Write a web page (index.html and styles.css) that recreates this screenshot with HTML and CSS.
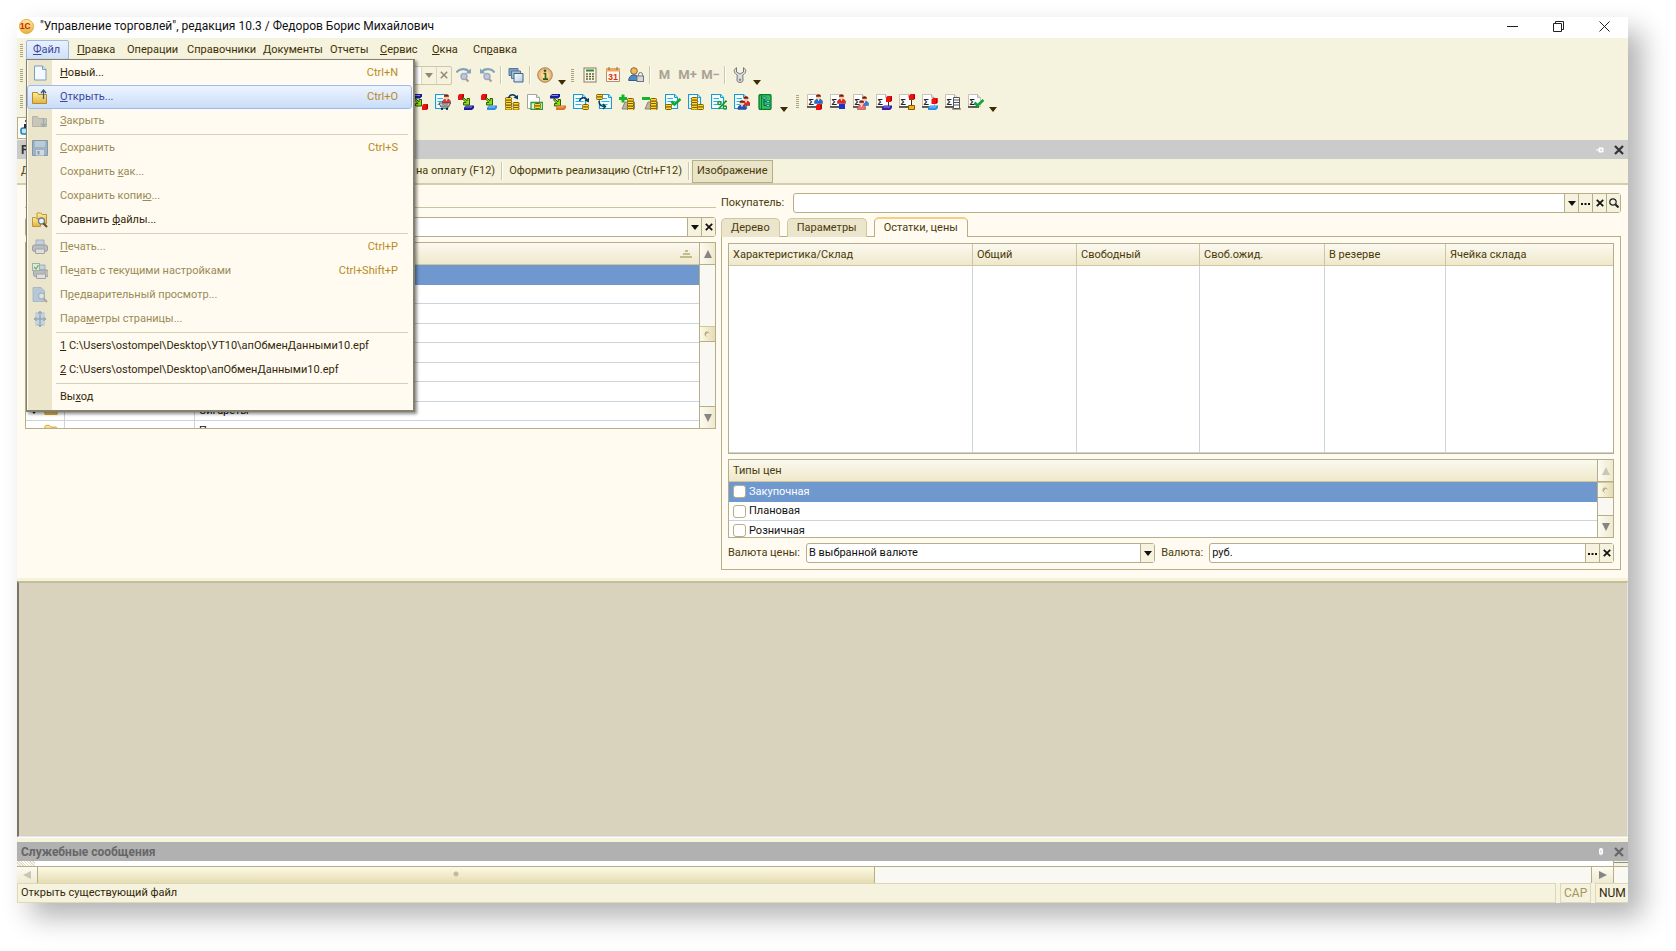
FILE: index.html
```html
<!DOCTYPE html>
<html lang="ru">
<head>
<meta charset="utf-8">
<title>Управление торговлей, редакция 10.3</title>
<link rel="stylesheet" href="styles.css">
</head>
<body>
<svg class="sprite" aria-hidden="true">
  <defs>
    <linearGradient id="gold" x1="0" y1="0" x2="0" y2="1"><stop offset="0" stop-color="#fdeea0"/><stop offset="1" stop-color="#e3b23c"/></linearGradient>
    <linearGradient id="pane" x1="0" y1="0" x2="1" y2="1"><stop offset="0" stop-color="#fff"/><stop offset="1" stop-color="#b4cbe0"/></linearGradient>
    <radialGradient id="amber"><stop offset="0" stop-color="#fff3d0"/><stop offset="1" stop-color="#f0a858"/></radialGradient>
    <g id="doc"><path d="M.5.500h9l3 3v11H.5z" fill="#f4fcff" stroke="#1c9ad0" stroke-width="1.200"/><path d="M9.500.500v3h3" fill="#bfe6f6" stroke="#1c9ad0"/><path d="M2.500 4.500h5.500M2.500 7.500h8M2.500 10.500h6" stroke="#25b4e6"/></g>
    <g id="page"><path d="M.5.500h9l3 3v11H.5z" fill="#fff" stroke="#a5a5a0"/><path d="M9.500.500v3h3" fill="#e4e4e4" stroke="#a5a5a0"/></g>
    <g id="coin"><rect x=".5" y=".5" width="6" height="2.500" rx="1" fill="#ffd92e" stroke="#7d5c00"/></g>
    <g id="coins3"><use href="#coin" y="5"/><use href="#coin" y="2.500"/><use href="#coin"/></g>
    <g id="cube"><path d="M0 1.500L1.500 0H6v4.500L4.500 6H0z" fill="#ee1111"/><path d="M4.500 6V1.500L6 0v4.500z" fill="#b00000"/></g>
    <g id="slab"><path d="M0 2l2-2h8v2.500L8 4.500H0z" fill="currentColor"/><path d="M1.500 1.500h6.500" stroke="#fff" stroke-opacity=".5"/></g>
    <g id="arrow"><path d="M0 0l4 4V1.500h2.500V8H.5V5.500H3L0 2.500z" fill="#8fdc10" stroke="#2a6000"/></g>
    <g id="man"><path d="M.5 9.500V7L2.500 5h4l2 2v2.500z" fill="currentColor" stroke="#333" stroke-opacity=".55" stroke-width=".7"/><circle cx="4.500" cy="3.200" r="2.200" fill="#ffc9a0"/><path d="M2 2.800C2-.5 7-.5 7 2.800z" fill="#7a1d0c"/><path d="M3.500 5.200l1 2 1-2z" fill="#fff"/></g>
    <g id="sigma"><path d="M.5.500h9l3 3v9H.5z" fill="#fff" stroke="#c4c4bf"/><path d="M9.500.500v3h3" fill="#e4e4e4" stroke="#b4b4b0"/><path d="M0 13h11" stroke="#333" stroke-width="1.500"/><text x="1.500" y="10.500" class="glyph">Σ</text></g>
    <g id="curl"><path d="M.5 4C2-.3 7-.3 8.500 4" fill="none" stroke="#0b3a5c" stroke-width="1.400"/><path d="M5.500 3.500l4.500 2V1z" fill="#0b3a5c"/></g>
    <g id="check"><path d="M0 3.500l3 3 6-5.500" fill="none" stroke="#0fa82c" stroke-width="2.600"/></g>
    <g id="find"><path d="M.5 5.500C3 1.500 10 .5 13.500 5" fill="none" stroke="#86a3ba" stroke-width="2.200"/><path d="M9.500 6.500H15V1.500z" fill="#86a3ba"/><circle cx="8" cy="9.500" r="3" fill="#b9cbe2" stroke="#a3a9bb" stroke-width="1.400"/><path d="M10 12l2.500 2.500" stroke="#b39a92" stroke-width="2.200"/></g>
    <g id="printer"><path d="M4 6V1h8v5z" fill="#c4d2e0" stroke="#a2b0bd"/><rect x=".5" y="6" width="15" height="6.500" rx="2" fill="#b9bcc0" stroke="#9a9da0"/><path d="M3.500 10h9v4.500h-9z" fill="#dfdfdd" stroke="#a3a3a3"/><path d="M11 8h2" stroke="#d99a9a"/></g>
    <symbol id="i-new" viewBox="0 0 16 16"><path d="M2.500 1h8l3.500 3.500V15H2.500z" fill="#f3f9ff" stroke="#7d9db8"/><path d="M10.500 1v3.500H14" fill="#cde2f4" stroke="#7d9db8"/></symbol>
    <symbol id="i-open" viewBox="0 0 16 16"><path d="M.5 3.500h5l1 2h8v9H.5z" fill="url(#gold)" stroke="#b88a2c"/><path d="M11.500 10V1.500M9 4l2.500-3L14 4" fill="none" stroke="#3c5c7c" stroke-width="1.300"/></symbol>
    <symbol id="i-close" viewBox="0 0 16 16"><path d="M.5 3.500h5l1 2h8v8H.5z" fill="#c8c6b8" stroke="#b5b3a6"/><path d="M11.500 5v8M9 10.500l2.500 3 2.500-3" fill="none" stroke="#98aab8" stroke-width="1.300"/></symbol>
    <symbol id="i-save" viewBox="0 0 16 16"><path d="M.5.500h15v15H.5z" fill="#9fb2c4" stroke="#8498ab"/><path d="M3 1h10v6H3z" fill="#bccad6"/><path d="M4 10h8v5.500H4z" fill="#d2d9de"/><path d="M5.500 11h2v3.500h-2z" fill="#8498ab"/></symbol>
    <symbol id="i-compare" viewBox="0 0 16 16"><path d="M5 1h4l1 1.500h4.500v9H5z" fill="url(#gold)" stroke="#c1943a"/><path d="M.5 5.500h3l1 1.500h4v7.500h-8z" fill="url(#gold)" stroke="#c1943a"/><circle cx="9.500" cy="9" r="3" fill="#e9f3fb" stroke="#6f7f90" stroke-width="1.300"/><path d="M11.500 11.500l3.500 3.500" stroke="#6b4524" stroke-width="2"/></symbol>
    <symbol id="i-print" viewBox="0 0 16 16"><use href="#printer"/></symbol>
    <symbol id="i-printset" viewBox="0 0 16 16"><use href="#printer" x="1" y="1"/><rect x=".5" y=".5" width="7" height="7" fill="#dfeadb" stroke="#9db39b"/><path d="M2 4l2 2 2.500-4" fill="none" stroke="#6fae72" stroke-width="1.300"/></symbol>
    <symbol id="i-preview" viewBox="0 0 16 16"><path d="M1 .5h8l3.500 3.500v10.500H1z" fill="#b6c7d6" stroke="#a8bac9"/><circle cx="9.500" cy="9" r="3" fill="#d9e4ec" stroke="#9da7b1"/><path d="M11.500 11.500L15 15" stroke="#b3a195" stroke-width="2"/></symbol>
    <symbol id="i-pageset" viewBox="0 0 16 16"><rect x="3" y="1" width="10" height="14" rx="1" fill="#c6d1da"/><path d="M8 0v16M2 8h12M6 2.500L8 .5l2 2M6 13.500l2 2 2-2M4.500 6l-2 2 2 2M11.500 6l2 2-2 2" fill="none" stroke="#8398aa"/></symbol>
    <symbol id="i-find1" viewBox="0 0 16 16"><use href="#find"/></symbol>
    <symbol id="i-find2" viewBox="0 0 16 16"><path d="M15.500 5.500C13 1.500 6 .5 2.500 5" fill="none" stroke="#86a3ba" stroke-width="2.200"/><path d="M6.500 6.500H1V1.500z" fill="#86a3ba"/><circle cx="8" cy="9.500" r="3" fill="#b9cbe2" stroke="#a3a9bb" stroke-width="1.400"/><path d="M10 12l2.500 2.500" stroke="#b39a92" stroke-width="2.200"/></symbol>
    <symbol id="i-wins" viewBox="0 0 16 16"><path d="M1 1.500h9v7H1z" fill="#7fa0bf" stroke="#54779b"/><path d="M3.500 4h9v7.500h-9z" fill="#a3bdd6" stroke="#54779b"/><path d="M6 6.500h9V15H6z" fill="url(#pane)" stroke="#3f648a"/></symbol>
    <symbol id="i-info" viewBox="0 0 16 16"><circle cx="8" cy="8" r="7.300" fill="url(#amber)" stroke="#9b8a6c"/><path d="M6.500 6.500h2V12M6 12.200h5" stroke="#2f5d1a" stroke-width="1.700" fill="none"/><circle cx="8" cy="3.800" r="1.300" fill="#2f5d1a"/></symbol>
    <symbol id="i-calc" viewBox="0 0 16 16"><rect x="2" y="1" width="12" height="14" fill="#fdf6e4" stroke="#8a7b68"/><path d="M4 3.500h8" stroke="#2f8a3c" stroke-width="2"/><path d="M4 7h8M4 9.500h8M4 12h8" stroke="#5b6a36" stroke-width="1.500" stroke-dasharray="2 1"/></symbol>
    <symbol id="i-cal" viewBox="0 0 16 16"><path d="M1.500 1.500h13v13h-13z" fill="#fff8ee" stroke="#b78c68"/><path d="M1 1h14v3.500H1z" fill="#eda765"/><path d="M4 0v3M12 0v3" stroke="#8a6a4c"/><text x="3" y="13" class="glyph glyph-red">31</text></symbol>
    <symbol id="i-user" viewBox="0 0 16 16"><circle cx="6" cy="4" r="3.300" fill="#f0b860" stroke="#8f6532"/><path d="M.7 13.500c0-7.500 10.500-7.500 10.500 0z" fill="#4f8bc0" stroke="#2c5f8c"/><path d="M10.500 9V7.500a2 2 0 014 0V9" fill="none" stroke="#777"/><rect x="9" y="9" width="6.500" height="5.500" fill="#d5d8dc" stroke="#6d7680"/></symbol>
    <symbol id="i-wrench" viewBox="0 0 16 16"><path d="M4.500.700v4.300L8 7l3.500-2V.7c3.500 2 2.700 5.500-.8 7.500l.3 5c0 3-6 3-6 0l.3-5C1.800 6.200 1 2.700 4.500.700z" fill="#dedede" stroke="#757575"/><circle cx="8" cy="12.800" r="1.200" fill="#888"/></symbol>
    <symbol id="i-a0" viewBox="0 0 16 16"><use href="#slab" color="#1c1c9c"/><use href="#arrow" x="3" y="4"/><use href="#cube" x="10" y="10"/></symbol>
    <symbol id="i-a1" viewBox="0 0 16 16"><use href="#doc"/><use href="#man" x="7" y="0" color="#e33"/><path d="M4 9h11.500l-2 4H6z" fill="#fff" stroke="#444"/><path d="M6 11h8M8 9v4M10 9v4M12 9v4" stroke="#555" stroke-width=".7"/><circle cx="7" cy="15" r="1"/><circle cx="12" cy="15" r="1"/></symbol>
    <symbol id="i-a2" viewBox="0 0 16 16"><use href="#cube"/><use href="#arrow" x="5" y="3"/><use href="#slab" x="6" y="11.500" color="#1c1c9c"/></symbol>
    <symbol id="i-a3" viewBox="0 0 16 16"><use href="#cube"/><use href="#arrow" x="5" y="3"/><use href="#slab" x="6" y="11.500" color="#2d8fe8"/></symbol>
    <symbol id="i-a4" viewBox="0 0 16 16"><use href="#coins3" x="1" y="8"/><use href="#coins3" x="1" y="3"/><use href="#coins3" x="8.500" y="8"/><use href="#curl" x="4" y="0"/></symbol>
    <symbol id="i-a5" viewBox="0 0 16 16"><use href="#page"/><path d="M4 8.500h11.500v7H4z" fill="#eaf6dc" stroke="#2b9a3a" stroke-width="1.300"/><use href="#coin" x="7" y="9"/><use href="#coin" x="7" y="11.500"/></symbol>
    <symbol id="i-a6" viewBox="0 0 16 16"><use href="#slab" color="#1c1c9c"/><use href="#arrow" x="4" y="4"/><use href="#slab" x="6" y="11.500" color="#dc7424"/></symbol>
    <symbol id="i-a7" viewBox="0 0 16 16"><use href="#doc"/><use href="#curl" x="6" y="3"/><use href="#coin" x="9" y="10"/><use href="#coin" x="9" y="12.500"/></symbol>
    <symbol id="i-a8" viewBox="0 0 16 16"><use href="#doc" x="3"/><use href="#coin"/><use href="#coin" y="2.500"/><path d="M3 7c0 5 3 5.500 6 5.500M7 10l2.500 2.500L7 15" fill="none" stroke="#0b3a5c" stroke-width="1.400"/></symbol>
    <symbol id="i-a9" viewBox="0 0 16 16"><path d="M6 8h9.500v7H3z" fill="#b9b6a6" stroke="#8b8878"/><use href="#coins3" x="8" y="4"/><use href="#coins3" x="8" y="9"/><path d="M0 4.500h8M4 .5v8" stroke="#14b52c" stroke-width="3"/></symbol>
    <symbol id="i-a10" viewBox="0 0 16 16"><path d="M6 8h9.500v7H3z" fill="#b9b6a6" stroke="#8b8878"/><use href="#coins3" x="8" y="4"/><use href="#coins3" x="8" y="9"/><path d="M0 4.500h8" stroke="#14b52c" stroke-width="3"/></symbol>
    <symbol id="i-a11" viewBox="0 0 16 16"><use href="#doc"/><use href="#check" x="6.500" y="4"/><use href="#coin" y="10"/><use href="#coin" y="12.500"/></symbol>
    <symbol id="i-a12" viewBox="0 0 16 16"><use href="#doc"/><use href="#coins3" x="3" y="3"/><use href="#coins3" x="3" y="8"/><use href="#coin" x="9" y="10"/><use href="#coin" x="9" y="12.500"/></symbol>
    <symbol id="i-a13" viewBox="0 0 16 16"><use href="#doc"/><path d="M15.500 6.500L7.500 15" stroke="#12962d" stroke-width="1.800"/><circle cx="8.500" cy="9" r="1.600" fill="#fff" stroke="#12962d" stroke-width="1.500"/><circle cx="14" cy="13.500" r="1.600" fill="#fff" stroke="#12962d" stroke-width="1.500"/></symbol>
    <symbol id="i-a14" viewBox="0 0 16 16"><use href="#doc"/><use href="#man" x="7.500" y="2" color="#e22"/><use href="#man" x="3.500" y="6" color="#1d53c8"/></symbol>
    <symbol id="i-a15" viewBox="0 0 16 16"><rect x="2" y=".5" width="12" height="15" rx="1.500" fill="#2fc455" stroke="#0b7b2c" stroke-width="1.300"/><path d="M4.500 1v14" stroke="#0b7b2c"/><path d="M7 4v7.500h2M7 7.500h2" stroke="#0e4f6e" fill="none"/><path d="M6 3h3v2H6zM9.500 6.500h3v2h-3zM9.500 10.500h3v2h-3z" fill="#7fe0f0" stroke="#0e4f6e" stroke-width=".6"/></symbol>
    <symbol id="i-s0" viewBox="0 0 16 16"><use href="#sigma"/><use href="#man" x="7" y="0" color="#1d6be0"/><use href="#cube" x="9" y="10"/></symbol>
    <symbol id="i-s1" viewBox="0 0 16 16"><use href="#sigma"/><use href="#man" x="7" y="0" color="#e22"/><path d="M9 10h6v5H9z" fill="#1a35c8"/></symbol>
    <symbol id="i-s2" viewBox="0 0 16 16"><use href="#sigma"/><use href="#man" x="7" y="2" color="#3b7be0"/><use href="#man" x="4" y="6" color="#f66"/></symbol>
    <symbol id="i-s3" viewBox="0 0 16 16"><use href="#sigma"/><use href="#cube" x="10" y="2"/><path d="M12.500 8v4" stroke="#333"/><use href="#slab" x="6" y="11.500" color="#3a1cac"/></symbol>
    <symbol id="i-s4" viewBox="0 0 16 16"><use href="#sigma"/><use href="#cube" x="10" y="0"/><path d="M12.500 6v5" stroke="#333"/><path d="M9.500 11.500h6v4h-6z" fill="#f2b21c" stroke="#8c5a00"/></symbol>
    <symbol id="i-s5" viewBox="0 0 16 16"><use href="#sigma"/><use href="#cube" x="9.500" y="4"/><use href="#slab" x="6" y="11.500" color="#2d8fe8"/></symbol>
    <symbol id="i-s6" viewBox="0 0 16 16"><use href="#sigma"/><path d="M8.500 3.500h6v11h-6z" fill="#fff" stroke="#555"/><path d="M9 6h5M9 8.500h5M9 11h5M7 15h9" stroke="#555"/></symbol>
    <symbol id="i-s7" viewBox="0 0 16 16"><use href="#sigma"/><use href="#check" x="6.500" y="5"/></symbol>
    <symbol id="i-folder" viewBox="0 0 16 16"><path d="M1 3.500C1 2 2 1.500 3 1.500h3L8 3.500h5c1.500 0 2 1 2 2V12H1z" fill="url(#gold)" stroke="#c99a2e"/></symbol>
    <symbol id="i-x" viewBox="0 0 10 10"><path d="M1 1l8 8M9 1L1 9" stroke="currentColor" stroke-width="2.200"/></symbol>
    <symbol id="i-down" viewBox="0 0 8 5"><path d="M0 0h8L4 5z" fill="currentColor"/></symbol>
    <symbol id="i-dots" viewBox="0 0 9 3"><path d="M0 1h2v2H0zM3.500 1h2v2h-2zM7 1h2v2H7z" fill="currentColor"/></symbol>
    <symbol id="i-lens" viewBox="0 0 10 10"><circle cx="4" cy="4" r="3.200" fill="none" stroke="#222" stroke-width="1.200"/><path d="M6.500 6.500L9.500 9.500" stroke="#222" stroke-width="2"/></symbol>
  </defs>
</svg>

<main class="window">
  <header class="titlebar">
    <svg class="logo" viewBox="0 0 16 16" aria-hidden="true"><circle cx="8" cy="8" r="7.500" fill="url(#gold)" stroke="#e0a92c"/><text x="1" y="11" class="logo-text">1С</text></svg>
    <h1 class="caption">"Управление торговлей", редакция 10.3 / Федоров Борис Михайлович</h1>
    <div class="winbtns">
      <button type="button" aria-label="Свернуть"><svg width="11" height="11" viewBox="0 0 11 11"><path d="M0 5.500h11" stroke="#222"/></svg></button>
      <button type="button" aria-label="Восстановить"><svg width="11" height="11" viewBox="0 0 11 11"><path d="M.5 2.500h8v8h-8zM2.500 2.500v-2h8v8h-2" fill="none" stroke="#222"/></svg></button>
      <button type="button" aria-label="Закрыть окно"><svg width="11" height="11" viewBox="0 0 11 11"><path d="M.5.500l10 10M10.500.500l-10 10" stroke="#222"/></svg></button>
    </div>
  </header>

  <nav class="menubar">
    <span class="grip"></span>
    <div class="menus">
      <div class="menu-root">
        <button type="button" class="menu open"><u>Ф</u>айл</button>
        <div class="popup" role="menu">
          <button type="button" class="item"><span class="ico"><svg><use href="#i-new"/></svg></span><span><u>Н</u>овый...</span><kbd>Ctrl+N</kbd></button>
          <button type="button" class="item hot"><span class="ico"><svg><use href="#i-open"/></svg></span><span><u>О</u>ткрыть...</span><kbd>Ctrl+O</kbd></button>
          <button type="button" class="item off"><span class="ico"><svg><use href="#i-close"/></svg></span><span><u>З</u>акрыть</span></button>
          <hr>
          <button type="button" class="item off"><span class="ico"><svg><use href="#i-save"/></svg></span><span><u>С</u>охранить</span><kbd>Ctrl+S</kbd></button>
          <button type="button" class="item off"><span class="ico"></span><span>Сохранить <u>к</u>ак...</span></button>
          <button type="button" class="item off"><span class="ico"></span><span>Сохранить копи<u>ю</u>...</span></button>
          <button type="button" class="item"><span class="ico"><svg><use href="#i-compare"/></svg></span><span>Сравнить <u>ф</u>айлы...</span></button>
          <hr>
          <button type="button" class="item off"><span class="ico"><svg><use href="#i-print"/></svg></span><span><u>П</u>ечать...</span><kbd>Ctrl+P</kbd></button>
          <button type="button" class="item off"><span class="ico"><svg><use href="#i-printset"/></svg></span><span>Пе<u>ч</u>ать с текущими настройками</span><kbd>Ctrl+Shift+P</kbd></button>
          <button type="button" class="item off"><span class="ico"><svg><use href="#i-preview"/></svg></span><span>П<u>р</u>едварительный просмотр...</span></button>
          <button type="button" class="item off"><span class="ico"><svg><use href="#i-pageset"/></svg></span><span>Пара<u>м</u>етры страницы...</span></button>
          <hr>
          <button type="button" class="item"><span class="ico"></span><span><u>1</u> C:\Users\ostompel\Desktop\УТ10\апОбменДанными10.epf</span></button>
          <button type="button" class="item"><span class="ico"></span><span><u>2</u> C:\Users\ostompel\Desktop\апОбменДанными10.epf</span></button>
          <hr>
          <button type="button" class="item"><span class="ico"></span><span>Вы<u>х</u>од</span></button>
        </div>
      </div>
      <button type="button" class="menu"><u>П</u>равка</button>
      <button type="button" class="menu">Операции</button>
      <button type="button" class="menu">Справочники</button>
      <button type="button" class="menu">Документы</button>
      <button type="button" class="menu">Отчеты</button>
      <button type="button" class="menu"><u>С</u>ервис</button>
      <button type="button" class="menu"><u>О</u>кна</button>
      <button type="button" class="menu">Сп<u>р</u>авка</button>
    </div>
  </nav>

  <div class="toolbar">
    <span class="grip"></span>
    <div class="search">
      <input type="text" aria-label="Поиск">
      <button type="button" aria-label="История поиска"><svg class="dn"><use href="#i-down"/></svg></button>
      <button type="button" aria-label="Очистить"><svg class="xs" viewBox="0 0 10 10"><path d="M1 1l8 8M9 1L1 9" stroke="currentColor" stroke-width="1.800"/></svg></button>
    </div>
    <button type="button" class="tb" aria-label="Найти далее"><svg><use href="#i-find1"/></svg></button>
    <button type="button" class="tb" aria-label="Найти ранее"><svg><use href="#i-find2"/></svg></button>
    <span class="sep"></span>
    <button type="button" class="tb" aria-label="Окна"><svg><use href="#i-wins"/></svg></button>
    <span class="sep"></span>
    <button type="button" class="tb" aria-label="Справка"><svg><use href="#i-info"/></svg></button>
    <button type="button" class="more" aria-label="Ещё"><svg class="dn"><use href="#i-down"/></svg></button>
    <span class="grip mid"></span>
    <button type="button" class="tb" aria-label="Калькулятор"><svg><use href="#i-calc"/></svg></button>
    <button type="button" class="tb" aria-label="Календарь"><svg><use href="#i-cal"/></svg></button>
    <button type="button" class="tb" aria-label="Пользователь"><svg><use href="#i-user"/></svg></button>
    <span class="sep"></span>
    <button type="button" class="tb mem">M</button>
    <button type="button" class="tb mem">M+</button>
    <button type="button" class="tb mem">M−</button>
    <span class="sep"></span>
    <button type="button" class="tb" aria-label="Параметры"><svg><use href="#i-wrench"/></svg></button>
    <button type="button" class="more" aria-label="Ещё"><svg class="dn"><use href="#i-down"/></svg></button>
  </div>

  <div class="toolbar">
    <span class="grip"></span>
    <span class="lead"></span>
    <button type="button" class="tb" aria-label="Операция 1"><svg><use href="#i-a0"/></svg></button>
    <button type="button" class="tb" aria-label="Операция 2"><svg><use href="#i-a1"/></svg></button>
    <button type="button" class="tb" aria-label="Операция 3"><svg><use href="#i-a2"/></svg></button>
    <button type="button" class="tb" aria-label="Операция 4"><svg><use href="#i-a3"/></svg></button>
    <button type="button" class="tb" aria-label="Операция 5"><svg><use href="#i-a4"/></svg></button>
    <button type="button" class="tb" aria-label="Операция 6"><svg><use href="#i-a5"/></svg></button>
    <button type="button" class="tb" aria-label="Операция 7"><svg><use href="#i-a6"/></svg></button>
    <button type="button" class="tb" aria-label="Операция 8"><svg><use href="#i-a7"/></svg></button>
    <button type="button" class="tb" aria-label="Операция 9"><svg><use href="#i-a8"/></svg></button>
    <button type="button" class="tb" aria-label="Операция 10"><svg><use href="#i-a9"/></svg></button>
    <button type="button" class="tb" aria-label="Операция 11"><svg><use href="#i-a10"/></svg></button>
    <button type="button" class="tb" aria-label="Операция 12"><svg><use href="#i-a11"/></svg></button>
    <button type="button" class="tb" aria-label="Операция 13"><svg><use href="#i-a12"/></svg></button>
    <button type="button" class="tb" aria-label="Операция 14"><svg><use href="#i-a13"/></svg></button>
    <button type="button" class="tb" aria-label="Операция 15"><svg><use href="#i-a14"/></svg></button>
    <button type="button" class="tb" aria-label="Операция 16"><svg><use href="#i-a15"/></svg></button>
    <button type="button" class="more wide" aria-label="Ещё"><svg class="dn"><use href="#i-down"/></svg></button>
    <span class="grip mid"></span>
    <button type="button" class="tb" aria-label="Отчет 1"><svg><use href="#i-s0"/></svg></button>
    <button type="button" class="tb" aria-label="Отчет 2"><svg><use href="#i-s1"/></svg></button>
    <button type="button" class="tb" aria-label="Отчет 3"><svg><use href="#i-s2"/></svg></button>
    <button type="button" class="tb" aria-label="Отчет 4"><svg><use href="#i-s3"/></svg></button>
    <button type="button" class="tb" aria-label="Отчет 5"><svg><use href="#i-s4"/></svg></button>
    <button type="button" class="tb" aria-label="Отчет 6"><svg><use href="#i-s5"/></svg></button>
    <button type="button" class="tb" aria-label="Отчет 7"><svg><use href="#i-s6"/></svg></button>
    <button type="button" class="tb" aria-label="Отчет 8"><svg><use href="#i-s7"/></svg></button>
    <button type="button" class="more" aria-label="Ещё"><svg class="dn"><use href="#i-down"/></svg></button>
  </div>

  <div class="toolbar third">
    <button type="button" class="panelbtn" aria-label="Панель функций"><svg viewBox="0 0 16 16"><path d="M5 1h8v7" fill="none" stroke="#222" stroke-width="1.500" stroke-dasharray="1 1"/><rect x="1" y="8" width="10" height="6" rx="2" fill="#bfe4f5" stroke="#1c7fb0" stroke-width="1.500"/><path d="M4 4h4v4H4z" fill="#234"/></svg></button>
  </div>

  <div class="doctitle">
    <strong>Р</strong>
    <svg class="pin" viewBox="0 0 8 6" aria-hidden="true"><path d="M0 3h3M3 1h4v4H3z" fill="#fff" stroke="#fff"/><path d="M4 3h2" stroke="#bbb"/></svg>
    <button type="button" aria-label="Закрыть форму"><svg class="xx"><use href="#i-x"/></svg></button>
  </div>

  <div class="cmdbar">
    <button type="button" class="cmd first">Д</button>
    <button type="button" class="cmd">Счет на оплату (F12)</button>
    <span class="sep"></span>
    <button type="button" class="cmd">Оформить реализацию (Ctrl+F12)</button>
    <span class="sep"></span>
    <button type="button" class="cmd pressed">Изображение</button>
  </div>

  <section class="form">
    <div class="left">
      <div class="rule"></div>
      <div class="field">
        <input type="text" aria-label="Отбор">
        <button type="button" aria-label="Выбрать"><svg class="dn"><use href="#i-down"/></svg></button>
        <button type="button" aria-label="Очистить"><svg class="xs"><use href="#i-x"/></svg></button>
      </div>
      <div class="grid goods">
        <table>
          <colgroup><col class="c-ico"><col class="c-code"><col></colgroup>
          <thead><tr><th></th><th></th><th class="sorted"><svg viewBox="0 0 12 8" width="12" height="8"><path d="M5 0h3v2H5zM3 3h7v2H3zM0 6h12v2H0z" fill="#c5bb88"/></svg></th></tr></thead>
          <tbody>
            <tr class="sel"><td></td><td></td><td></td></tr>
            <tr><td></td><td></td><td></td></tr>
            <tr><td></td><td></td><td></td></tr>
            <tr><td></td><td></td><td></td></tr>
            <tr><td></td><td></td><td></td></tr>
            <tr><td></td><td></td><td></td></tr>
            <tr><td></td><td></td><td></td></tr>
            <tr><td class="mark"><svg class="dn"><use href="#i-down"/></svg><svg class="fold"><use href="#i-folder"/></svg></td><td></td><td>Сигареты</td></tr>
            <tr><td class="mark"><svg class="dn"></svg><svg class="fold"><use href="#i-folder"/></svg></td><td></td><td>П</td></tr>
          </tbody>
        </table>
        <div class="vscroll">
          <button type="button" class="up" aria-label="Вверх"><svg viewBox="0 0 8 8"><path d="M0 8h8L4 0z"/></svg></button>
          <span class="track long"></span><span class="thumb"></span><span class="track"></span>
          <button type="button" aria-label="Вниз"><svg viewBox="0 0 8 8"><path d="M0 0h8L4 8z"/></svg></button>
        </div>
      </div>
    </div>

    <div class="right">
      <div class="row buyer">
        <label for="buyer">Покупатель:</label>
        <div class="field">
          <input type="text" id="buyer">
          <button type="button" aria-label="Список"><svg class="dn"><use href="#i-down"/></svg></button>
          <button type="button" aria-label="Выбрать"><svg class="dots"><use href="#i-dots"/></svg></button>
          <button type="button" aria-label="Очистить"><svg class="xs"><use href="#i-x"/></svg></button>
          <button type="button" aria-label="Открыть"><svg class="xx"><use href="#i-lens"/></svg></button>
        </div>
      </div>
      <div class="tabs">
        <button type="button" class="tab">Дерево</button>
        <button type="button" class="tab">Параметры</button>
        <button type="button" class="tab active">Остатки, цены</button>
      </div>
      <div class="panel">
        <div class="grid stock">
          <table>
            <colgroup><col class="s1"><col class="s2"><col class="s3"><col class="s4"><col class="s5"><col></colgroup>
            <thead><tr><th>Характеристика/Склад</th><th>Общий</th><th>Свободный</th><th>Своб.ожид.</th><th>В резерве</th><th>Ячейка склада</th></tr></thead>
            <tbody><tr><td></td><td></td><td></td><td></td><td></td><td></td></tr></tbody>
          </table>
        </div>
        <div class="grid prices">
          <table>
            <thead><tr><th>Типы цен</th></tr></thead>
            <tbody>
              <tr class="sel"><td><label><input type="checkbox">Закупочная</label></td></tr>
              <tr><td><label><input type="checkbox">Плановая</label></td></tr>
              <tr><td><label><input type="checkbox">Розничная</label></td></tr>
            </tbody>
          </table>
          <div class="vscroll">
            <button type="button" class="up dim" aria-label="Вверх"><svg viewBox="0 0 8 8"><path d="M0 8h8L4 0z"/></svg></button>
            <span class="thumb"></span><span class="track"></span>
            <button type="button" aria-label="Вниз"><svg viewBox="0 0 8 8"><path d="M0 0h8L4 8z"/></svg></button>
          </div>
        </div>
        <div class="row money">
          <label for="pcur">Валюта цены:</label>
          <div class="field f-a">
            <input type="text" id="pcur" value="В выбранной валюте">
            <button type="button" aria-label="Список"><svg class="dn"><use href="#i-down"/></svg></button>
          </div>
          <label for="cur">Валюта:</label>
          <div class="field f-b">
            <input type="text" id="cur" value="руб.">
            <button type="button" aria-label="Выбрать"><svg class="dots"><use href="#i-dots"/></svg></button>
            <button type="button" aria-label="Очистить"><svg class="xs"><use href="#i-x"/></svg></button>
          </div>
        </div>
      </div>
    </div>
  </section>

  <div class="mdi"></div>

  <section class="messages">
    <div class="msgtitle">
      <strong>Служебные сообщения</strong>
      <svg class="pin up" viewBox="0 0 6 8" aria-hidden="true"><rect x="1" y="0" width="4" height="7" rx="2" fill="#fff"/><path d="M3 2v3M3 6v2" stroke="#ccc"/></svg>
      <button type="button" aria-label="Закрыть сообщения"><svg class="xx"><use href="#i-x"/></svg></button>
    </div>
    <div class="msgbody"><span class="hatch"></span><span class="blank"></span><span class="nub"></span></div>
    <div class="hscroll">
      <button type="button" class="dim" aria-label="Влево"><svg viewBox="0 0 8 8"><path d="M8 0v8L0 4z"/></svg></button>
      <span class="hthumb"></span><span class="htrack"></span>
      <button type="button" aria-label="Вправо"><svg viewBox="0 0 8 8"><path d="M0 0v8l8-4z"/></svg></button>
      <span class="corner"></span>
    </div>
  </section>

  <footer class="status">
    <span class="hint">Открыть существующий файл</span>
    <span class="key off">CAP</span>
    <span class="key">NUM</span>
  </footer>
</main>
</body>
</html>
```
FILE: styles.css
```css
:root {
  --bar: #f5f2dd;
  --paper: #fffbf0;
  --line: #b6ae88;
  --sel: #6f98cf;
  --ink: #4b3a0b;
}
* { box-sizing: border-box; }
body {
  margin: 0;
  min-height: 100vh;
  padding: 17px 48px 48px 17px;
  background: #fff;
  color: var(--ink);
  font: 11px/16px Roboto, "Liberation Sans", sans-serif;
  display: flex;
}
button, input {
  font: inherit;
  color: inherit;
  border: 0;
  padding: 0;
  margin: 0;
  background: none;
  border-radius: 0;
}
button { display: flex; align-items: center; justify-content: center; flex: none; white-space: nowrap; }
svg { display: block; flex: none; }
.sprite { position: absolute; width: 0; height: 0; }
.glyph { font: bold 9px "Liberation Sans", sans-serif; fill: #222; }
.glyph-red { fill: #d03a1c; }

.window {
  flex: 1;
  min-width: 0;
  display: flex;
  flex-direction: column;
  background: var(--bar);
  box-shadow: 14px 14px 26px rgba(0, 0, 0, .3);
}
.titlebar { display: flex; align-items: center; height: 21px; padding: 0 0 3px 2px; background: #fff; }
.logo { width: 15px; height: 15px; }
.logo-text { font: bold 9px "Liberation Sans", sans-serif; fill: #d8190f; }
.caption { flex: 1; margin: 0 0 0 6px; font: 12px/16px Roboto, sans-serif; color: #111; white-space: nowrap; }
.winbtns { display: flex; padding-right: 1px; }
.winbtns button { width: 46px; height: 16px; }

.menubar { display: flex; align-items: center; height: 24px; padding-left: 3px; }
.grip {
  width: 3px;
  height: 13px;
  flex: none;
  background: repeating-linear-gradient(#aba47c 0 1px, transparent 1px 2px);
}
.grip.mid { margin: 0 4px; }
.menus { display: grid; grid-template-columns: 44px 50px 60px 76px 67px 50px 52px 41px 58px; margin-left: 3px; }
.menu { width: 100%; height: 20px; padding-left: 7px; justify-content: flex-start; color: #3d2f06; }
.menu.open {
  width: 43px;
  padding-left: 6px;
  border: 1px solid #9db7e8;
  border-radius: 2px;
  background: linear-gradient(#e9f1fd, #cfe0fa);
  color: #3a4a9c;
}
.menu-root { position: relative; }
.popup {
  position: absolute;
  z-index: 5;
  left: 0;
  top: 19px;
  width: 389px;
  padding: 1px 1px 1px 0;
  border: 1px solid #84816f;
  border-right-width: 2px;
  border-bottom-width: 2px;
  background: linear-gradient(90deg, #fffbf0 1px, #ebe5cb 1px 25px, var(--paper) 25px);
  box-shadow: 2px 2px 3px rgba(0, 0, 0, .45);
}
.popup hr { height: 1px; margin: 1px 4px 1px 29px; border: 0; background: #d5d0b8; }
.item { width: 100%; height: 24px; justify-content: flex-start; border: 1px solid transparent; border-radius: 3px; color: #33270a; }
.item .ico { width: 24px; height: 20px; margin-right: 8px; display: grid; place-items: center; }
.item svg { width: 16px; height: 16px; }
.item kbd { margin-left: auto; padding-right: 13px; font: inherit; color: #b98a22; }
.item.off { color: #9a8a58; }
.item.off kbd { color: #b98a22; }
.item.hot { border-color: #9db9ee; background: linear-gradient(#edf4ff, #c9ddf8); color: #3a4a9c; }

.toolbar { display: flex; align-items: center; height: 26px; padding-left: 3px; }
.toolbar + .toolbar { height: 27px; }
.search { display: flex; width: 385px; height: 19px; margin-left: 44px; border: 1px solid #cdc8aa; border-radius: 2px; color: #8c8874; }
.search input { flex: 1; min-width: 0; background: #fff; }
.search button { width: 15px; border-left: 1px solid #dcd7bc; }
.dn { width: 8px; height: 5px; }
.xx { width: 10px; height: 10px; }
.xs { width: 8px; height: 8px; }
.dots { width: 9px; height: 3px; }
.tb { width: 23px; height: 20px; }
.tb svg { width: 16px; height: 16px; }
.mem { font: bold 13px/16px Roboto, sans-serif; color: #aaa297; }
.sep { width: 6px; height: 18px; flex: none; background: linear-gradient(90deg, transparent 2px, #cdc8aa 2px 3px, #fff 3px 4px, transparent 4px); }
.more { width: 11px; height: 20px; align-items: flex-end; color: #3b2c06; }
.more.wide { width: 16px; }
.lead { width: 385px; flex: none; }
.toolbar.third { height: 25px; padding-left: 0; }
.panelbtn { width: 160px; height: 22px; padding-left: 2px; justify-content: flex-start; border: 1px solid var(--line); background: var(--paper); }
.panelbtn svg { width: 16px; height: 16px; }

.doctitle, .msgtitle { display: flex; align-items: center; height: 19px; padding: 0 4px; font-size: 12px; }
.doctitle { background: #cbcbcb; color: #333; }
.doctitle strong, .msgtitle strong { flex: 1; }
.pin { width: 8px; height: 6px; margin-right: 10px; }
.pin.up { width: 6px; height: 8px; }
.cmdbar { display: flex; align-items: center; height: 26px; padding: 0 4px; border-bottom: 2px solid #d3cdac; }
.cmd { height: 23px; padding: 0 4px; }
.cmd.first { width: 364px; padding: 0; justify-content: flex-start; }
.cmd.pressed { padding: 0 4px; border: 1px solid var(--line); background: #e9e3c8; }

.form { display: grid; grid-template-columns: 691fr 900fr; gap: 5px; padding: 8px 7px 8px 8px; background: var(--paper); border-bottom: 3px solid var(--bar); }
.left, .right { min-width: 0; }
.rule { height: 15px; margin-bottom: 9px; border-bottom: 1px solid #c9c3a0; }
.field { display: flex; height: 20px; border: 1px solid var(--line); border-radius: 3px; background: #fff; color: #111; }
.field input { flex: 1; min-width: 0; padding: 0 2px; outline: 0; }
.field button { width: 14px; border-left: 1px solid var(--line); background: var(--bar); color: #111; }

.grid { display: flex; border: 1px solid var(--line); background: #fff; overflow: hidden; }
.grid table { flex: 1; width: 100%; border-collapse: separate; border-spacing: 0; table-layout: fixed; align-self: flex-start; }
.grid th {
  height: 22px;
  padding: 0 4px;
  text-align: left;
  font-weight: 400;
  border-bottom: 1px solid #cdc69f;
  border-right: 1px solid #cdc69f;
  background: linear-gradient(#fbf9f0, #efe8cb);
}
.grid td { height: 20px; padding: 0 4px; border-bottom: 1px solid #cbd3db; border-right: 1px solid #cbd3db; color: #111; }
.grid tr > :last-child { border-right: 0; }
.grid .sel td { background: var(--sel); border-color: var(--sel); color: #fff; }
.goods { height: 187px; margin-top: 5px; }
.goods tbody tr:nth-child(even) td { height: 19px; }
.goods td { line-height: 14px; }
.goods .c-ico { width: 39px; }
.goods .c-code { width: 130px; }
.grid th.sorted svg { margin: 0 3px 0 auto; }
.mark { white-space: nowrap; }
.mark svg { display: inline-block; vertical-align: middle; }
.mark .fold { width: 16px; height: 14px; margin-left: 5px; }

.vscroll { display: flex; flex-direction: column; width: 16px; flex: none; border-left: 1px solid var(--line); background: #faf8f2; }
.vscroll button { height: 22px; background: linear-gradient(90deg, #fdfbf2, #efe9cf); border-top: 1px solid var(--line); }
.vscroll button.up { border-top: 0; border-bottom: 1px solid var(--line); }
.vscroll svg, .hscroll svg { width: 8px; height: 8px; fill: #858585; }
.vscroll .dim svg, .hscroll .dim svg { fill: #c9c6b4; }
.track { flex: 67; }
.track.long { flex: 63; }
.thumb { height: 16px; flex: none; border-top: 1px solid #cdc69f; border-bottom: 1px solid var(--line); background: radial-gradient(circle at 8px 8px, #efe8c6 2px, transparent 2px), radial-gradient(circle at 7px 7px, #b5ae8c 2px, transparent 3px), linear-gradient(90deg, #fdf9e6, #e5dcb2); }

.row { display: flex; align-items: center; white-space: nowrap; }
.buyer label { width: 72px; flex: none; }
.buyer .field { flex: 1; }
.tabs { display: flex; align-items: flex-end; gap: 7px; height: 20px; margin-top: 4px; position: relative; z-index: 1; }
.tab { height: 19px; padding: 0 9px; border: 1px solid #cdc7a6; border-bottom: 0; border-radius: 5px 5px 0 0; background: #ebe5cb; }
.tab.active { height: 20px; border-color: var(--line); border-top: 2px solid #f5cf85; background: var(--paper); }
.panel { margin-top: -1px; padding: 6px; border: 1px solid var(--line); }
.stock { height: 211px; }
.stock table { align-self: stretch; height: 100%; }
.stock .s1 { width: 244px; }
.stock .s2 { width: 104px; }
.stock .s3 { width: 123px; }
.stock .s4 { width: 125px; }
.stock .s5 { width: 121px; }
.prices { height: 79px; margin: 5px 0; }
.prices tr:nth-child(2) td { height: 19px; }
.prices label { display: flex; align-items: center; gap: 3px; }
.prices input { appearance: none; width: 13px; height: 13px; border: 1px solid var(--line); border-radius: 3px; background: #fff; }
.money { gap: 6px; }
.money .f-a { flex: 350; }
.money .f-b { flex: 406; }

.mdi { flex: 1; min-height: 80px; border: 1px solid #e4e4e4; border-top: 2px solid #c3bd9a; border-left: 2px solid #77756a; background: #d9d3bd; }
.messages { border-top: 1px solid #fff; padding-top: 4px; }
.msgtitle { background: #b1b1b1; color: #666; }
.msgbody { display: flex; height: 5px; background: #fff; }
.hatch { width: 18px; background: repeating-linear-gradient(45deg, #e4dfc0 0 1px, #fff 1px 2px); }
.blank { flex: 1; }
.nub { width: 15px; border-left: 1px solid var(--line); background: linear-gradient(#f5f2dd 1px, #8d8d85 1px 2px, #f5f2dd 2px); }
.hscroll { display: flex; height: 17px; border-top: 1px solid var(--line); background: #faf8f2; }
.hscroll button { width: 21px; background: linear-gradient(#fdfbf2, #efe9cf); border-right: 1px solid var(--line); }
.hscroll button:not(.dim) { width: 23px; border-left: 1px solid var(--line); }
.hthumb { flex: 837; border-right: 1px solid var(--line); background: radial-gradient(circle at 50% 7px, #c2bb98 2px, transparent 3px), linear-gradient(#fdf9e6, #efe8c6 60%, #e5dcb2); }
.htrack { flex: 717; }
.corner { width: 14px; }
.status { display: flex; gap: 4px; height: 20px; }
.status span { border: 1px solid #dcd7ba; line-height: 18px; }
.hint { flex: 1; padding-left: 3px; color: #33270a; }
.status .key { width: 31px; padding-left: 3px; color: #33270a; font-size: 12px; }
.status .key:last-child { width: 33px; border-right: 0; }
.status .key.off { color: #a8955a; }
```
